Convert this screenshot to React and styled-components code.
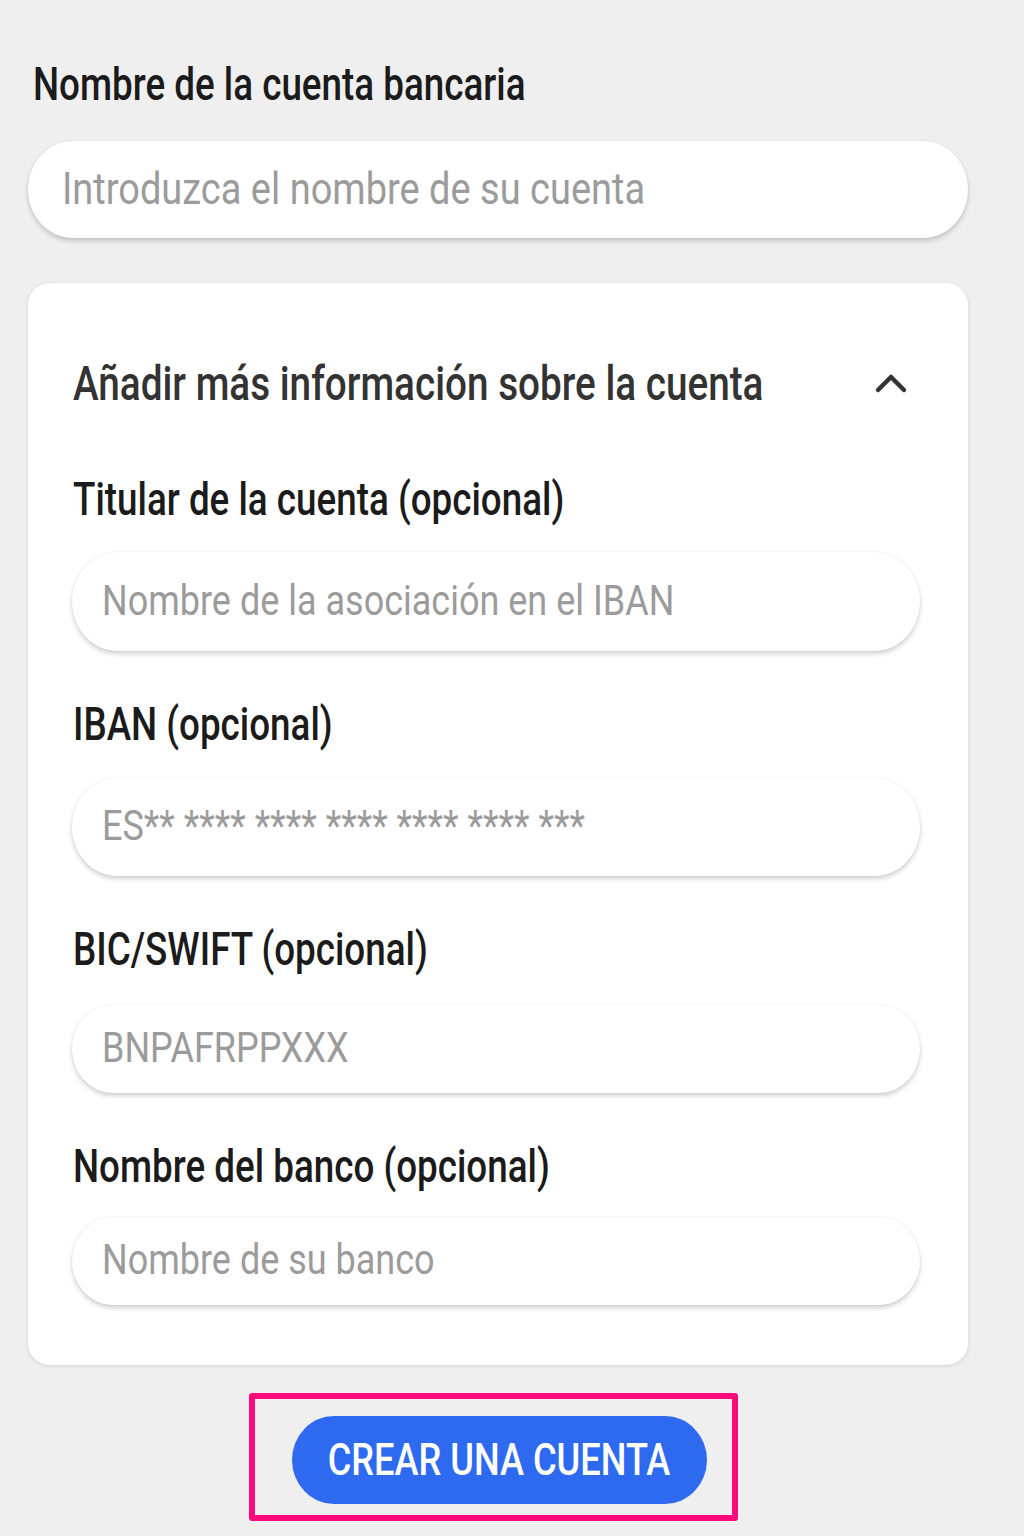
import React from 'react';
import styled, { createGlobalStyle } from 'styled-components';

const Global = createGlobalStyle`
  html, body { margin: 0; padding: 0; background: #efefef; }
  body { font-family: Roboto, "Noto Sans", Arial, sans-serif; }
  * { box-sizing: border-box; }
`;

const Page = styled.main`
  width: 1024px;
  min-height: 1536px;
  padding: 61px 56px 0 28px;
  display: flex;
  flex-direction: column;
`;

/* Text in this layout is drawn taller than its natural proportions */
const Tall = styled.span`
  display: inline-block;
  white-space: nowrap;
  transform: scaleY(${(p) => p.$sy || 1.25});
  transform-origin: 0 60%;
`;

const Label = styled.label`
  display: block;
  font-size: 36.8px;
  font-weight: 500;
  line-height: 50px;
  color: #1b1b1b;
  margin: ${(p) => p.$margin || '0'};
  padding-left: ${(p) => p.$indent || 0}px;
`;

const Field = styled.div`
  height: ${(p) => p.$h}px;
  background: #fff;
  border-radius: 46px / 50px;
  box-shadow: 0 3px 5px rgba(0, 0, 0, 0.18), 0 0 2px rgba(0, 0, 0, 0.07);
  display: flex;
  align-items: center;
  padding-left: ${(p) => p.$pad || 30}px;
  font-size: ${(p) => p.$size || 36}px;
  font-weight: 400;
  color: #9b9b9b;
  margin-bottom: ${(p) => p.$mb || 0}px;
`;

const Card = styled.section`
  margin-top: 45px;
  background: #fff;
  border-radius: 22px;
  box-shadow: 0 1px 4px rgba(0, 0, 0, 0.12);
  padding: 77px 48px 60px 44px;
  display: flex;
  flex-direction: column;
`;

const Header = styled.div`
  display: flex;
  align-items: center;
  justify-content: space-between;
  padding-left: 1px;
  padding-right: 12px;
  font-size: 38.7px;
  font-weight: 500;
  color: #333;
  line-height: 50px;
  margin-bottom: 66px;
`;

const Chevron = styled.svg`
  width: 34px;
  height: 26px;
  display: block;
  margin-top: -6px;
`;

const Actions = styled.div`
  display: flex;
  justify-content: center;
  padding: 28px 0 0 0;
`;

const Highlight = styled.div`
  width: 489px;
  height: 128px;
  margin-right: 10px;
  border: 6px solid #fb0a7c;
  border-radius: 3px;
  display: flex;
  align-items: center;
  padding: 6px 25px 0 37px;
`;

const Button = styled.button`
  width: 415px;
  height: 88px;
  border: none;
  border-radius: 44px / 46px;
  background: #2d6af0;
  color: #fff;
  font-family: inherit;
  font-size: 36.2px;
  font-weight: 500;
  display: flex;
  align-items: center;
  justify-content: center;
  cursor: pointer;
`;

const fields = [
  { label: 'Titular de la cuenta (opcional)', placeholder: 'Nombre de la asociación en el IBAN', h: 99, gap: 26 },
  { label: 'IBAN (opcional)', placeholder: 'ES** **** **** **** **** **** ***', h: 98, gap: 27 },
  { label: 'BIC/SWIFT (opcional)', placeholder: 'BNPAFRPPXXX', h: 88, gap: 29 },
  { label: 'Nombre del banco (opcional)', placeholder: 'Nombre de su banco', h: 88, gap: 24 },
];

export default function App() {
  return (
    <>
      <Global />
      <Page>
        <Label $indent={5} $margin="0 0 30px 0">
          <Tall>Nombre de la cuenta bancaria</Tall>
        </Label>
        <Field $h={97} $pad={34} $size={38}>
          <Tall $sy={1.15}>Introduzca el nombre de su cuenta</Tall>
        </Field>

        <Card>
          <Header>
            <Tall>Añadir más información sobre la cuenta</Tall>
            <Chevron viewBox="0 0 34 26">
              <path d="M4 21 L17 8 L30 21" fill="none" stroke="#333" strokeWidth="4.5" strokeLinecap="round" strokeLinejoin="round" />
            </Chevron>
          </Header>
          {fields.map((f, i) => (
            <React.Fragment key={f.label}>
              <Label $indent={1} $margin={`0 0 ${f.gap}px 0`}>
                <Tall>{f.label}</Tall>
              </Label>
              <Field $h={f.h} $mb={i < fields.length - 1 ? 50 : 0}>
                <Tall $sy={1.17}>{f.placeholder}</Tall>
              </Field>
            </React.Fragment>
          ))}
        </Card>

        <Actions>
          <Highlight>
            <Button type="button">
              <Tall $sy={1.2}>CREAR UNA CUENTA</Tall>
            </Button>
          </Highlight>
        </Actions>
      </Page>
    </>
  );
}
